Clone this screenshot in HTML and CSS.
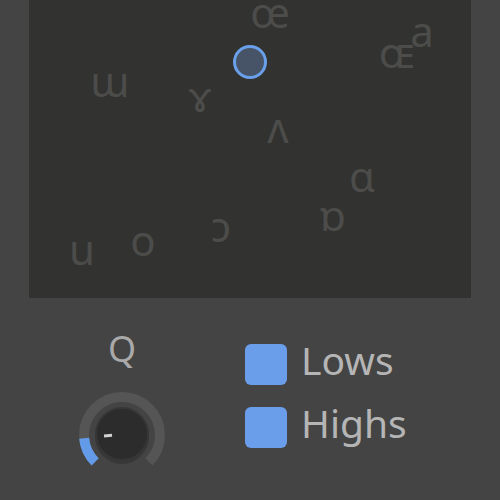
FILE: index.html
```html
<!DOCTYPE html>
<html lang="en">
<head>
    <meta charset="UTF-8">
    <meta name="viewport" content="width=device-width, initial-scale=1.0">
    <title>Vowel Filter</title>
    <link rel="stylesheet" href="styles.css">
</head>
<body>

    <div class="vowel-pad">
        <svg class="pad-svg" width="442" height="298" viewBox="0 0 442 298">
            <text class="vowel" x="241" y="28">œ</text>
            <text class="vowel" x="368" y="68">ɶ</text>
            <text class="vowel" x="393" y="47">a</text>
            <text class="vowel" x="81" y="97">ɯ</text>
            <text class="vowel" x="171" y="112">ɤ</text>
            <text class="vowel" x="249" y="143">ʌ</text>
            <text class="vowel" x="333" y="192">ɑ</text>
            <text class="vowel" x="304" y="231">ɒ</text>
            <text class="vowel" x="192" y="242">ɔ</text>
            <text class="vowel" x="114" y="256">o</text>
            <text class="vowel" x="53" y="265">u</text>
            <circle class="handle" cx="221" cy="62" r="15.5"/>
        </svg>
    </div>

    <div class="controls">
        <div class="knob-group">
            <div class="knob-label">Q</div>
            <svg class="knob" width="90" height="82" viewBox="0 0 90 82">
                <!-- 270 degree track, open at the bottom -->
                <path class="knob-track" d="M18.13 71.87 A38 38 0 1 1 71.87 71.87"/>
                <path class="knob-value" d="M18.13 71.87 A38 38 0 0 1 7.14 48.31"/>
                <circle class="knob-shadow" cx="45" cy="47" r="27"/>
                <circle class="knob-body" cx="45" cy="44" r="26"/>
                <line class="knob-pointer" x1="35" y1="45.2" x2="27" y2="45.9"/>
            </svg>
        </div>

        <div class="toggles">
            <label class="toggle">
                <span class="box"></span>
                <span class="toggle-text">Lows</span>
            </label>
            <label class="toggle">
                <span class="box"></span>
                <span class="toggle-text">Highs</span>
            </label>
        </div>
    </div>

</body>
</html>
```

FILE: styles.css
```css
body {
    background-color: #444444;
    margin: 0;
    padding: 0;
    font-family: 'Noto Sans', 'Open Sans', sans-serif;
    width: 500px;
    height: 500px;
    overflow: hidden;
}
.vowel-pad {
    background-color: #323230;
    margin: 0 29px;
    height: 298px;
}
.pad-svg {
    display: block;
}
.vowel {
    font-family: 'Noto Sans', 'DejaVu Sans', sans-serif;
    font-size: 42px;
    fill: #4c4c4a;
    text-anchor: middle;
}
.handle {
    fill: #475467;
    stroke: #6aa0ea;
    stroke-width: 3;
}
.controls {
    display: flex;
    padding-top: 33px;
    padding-left: 77px;
}
.knob-group {
    display: flex;
    flex-direction: column;
    align-items: center;
    width: 90px;
}
.knob-label {
    font-size: 36px;
    line-height: 1;
    color: #a9a9a9;
    margin-bottom: 23px;
}
.knob {
    display: block;
}
.knob-track {
    fill: none;
    stroke: #555555;
    stroke-width: 10;
}
.knob-value {
    fill: none;
    stroke: #639be9;
    stroke-width: 10;
}
.knob-shadow {
    fill: #383838;
}
.knob-body {
    fill: #2c2c2c;
    stroke: #363636;
    stroke-width: 2;
}
.knob-pointer {
    stroke: #d2d2d2;
    stroke-width: 3;
}
.toggles {
    display: flex;
    flex-direction: column;
    gap: 22px;
    margin-left: 78px;
    padding-top: 13px;
}
.toggle {
    display: flex;
    align-items: center;
    gap: 14px;
}
.box {
    width: 42px;
    height: 41px;
    border-radius: 6px;
    background-color: #6a9eea;
}
.toggle-text {
    font-size: 39px;
    line-height: 1;
    color: #b5b5b5;
    margin-top: -10px;
}
```
